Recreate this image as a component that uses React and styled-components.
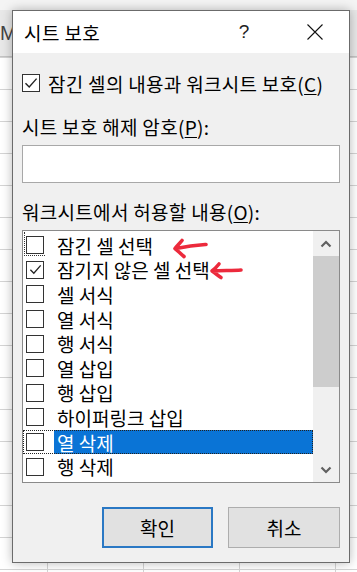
import React from 'react'
import styled, { createGlobalStyle } from 'styled-components'

const GlobalStyle = createGlobalStyle`
  * {
    margin: 0;
    padding: 0;
    box-sizing: border-box;
  }
  body {
    font-family: "Noto Sans CJK KR", "Noto Sans", sans-serif;
    background: #fff;
    overflow: hidden;
  }
`

const Sheet = styled.div`
  position: relative;
  width: 357px;
  height: 572px;
  overflow: hidden;
  background-color: #fff;
  background-image:
    linear-gradient(#d4d4d4 1px, transparent 1px),
    linear-gradient(90deg, #d4d4d4 1px, transparent 1px);
  background-size: 96px 32px;
  background-position: 47px 25px;
`

const TopStrip = styled.div`
  height: 10px;
  background: #f4f4f4;
`

const HeaderRow = styled.div`
  height: 47px;
  background: #e8e8e8;
  border-bottom: 1px solid #c4c4c4;
  display: flex;
  align-items: center;
`

const ColLabel = styled.span`
  margin-left: 0;
  font-family: "Liberation Sans", sans-serif;
  font-size: 20px;
  color: #444;
`

const Dialog = styled.div`
  position: absolute;
  left: 12px;
  top: 10px;
  width: 338px;
  height: 553px;
  border: 1px solid #6b6b6b;
  background: #f0f0f0;
  box-shadow: 0 0 10px rgba(0, 0, 0, 0.28);
  display: flex;
  flex-direction: column;
`

const TitleBar = styled.div`
  height: 42px;
  background: #fff;
  display: flex;
  align-items: center;
  padding-left: 11px;
`

const Title = styled.div`
  flex: 1;
  font-size: 19px;
  letter-spacing: 0.4px;
  color: #000;
`

const HelpMark = styled.div`
  width: 20px;
  text-align: center;
  font-family: "Liberation Sans", sans-serif;
  font-size: 19px;
  color: #222;
  margin-right: 52px;
`

const CloseButton = styled.div`
  width: 18px;
  height: 18px;
  margin-right: 25px;
  display: flex;
  align-items: center;
  justify-content: center;
`

const Body = styled.div`
  flex: 1;
  display: flex;
  flex-direction: column;
  padding: 18px 9px 14px 9px;
`

const CheckRow = styled.label`
  display: flex;
  align-items: center;
  height: 24px;
  font-size: 19px;
  letter-spacing: 0.3px;
  color: #000;
`

const Box = styled.span`
  width: 18px;
  height: 18px;
  border: 1px solid #333;
  background: #fff;
  display: inline-flex;
  align-items: center;
  justify-content: center;
  flex-shrink: 0;
  margin-right: ${p => p.$gap || 8}px;
`

const Label = styled.div`
  font-size: 19px;
  letter-spacing: 0.3px;
  line-height: 24px;
  color: #000;
  margin-top: ${p => p.$top}px;
`

const Key = styled.span`
  text-decoration: underline;
  text-underline-offset: 2px;
`

const PasswordInput = styled.div`
  margin-top: 6px;
  height: 38px;
  border: 1px solid #a8a8a8;
  background: #fff;
`

const ListBox = styled.div`
  position: relative;
  margin-top: 6px;
  height: 253px;
  border: 1px solid #8a8a8a;
  background: #fff;
  display: flex;
`

const Items = styled.div`
  flex: 1;
  padding-top: 2px;
`

const Item = styled.div`
  position: relative;
  height: 24.6px;
  display: flex;
  align-items: center;
  padding-left: 3px;
  outline: ${p => (p.$focus ? '1px dotted #222' : 'none')};
  outline-offset: -1px;
`

const ItemText = styled.span`
  flex: 1;
  align-self: stretch;
  display: flex;
  align-items: center;
  margin-left: 2px;
  padding-left: 3px;
  font-size: 19px;
  color: ${p => (p.$selected ? '#fff' : '#000')};
  background: ${p => (p.$selected ? '#0a74d6' : 'transparent')};
`

const FocusTrace = styled.span`
  position: absolute;
  left: 1px;
  top: -1px;
  width: 21px;
  height: 24px;
  border-left: 1px dotted #333;
  border-bottom: 1px dotted #333;
`

const ScrollBar = styled.div`
  width: 26px;
  background: #f0f0f0;
  display: flex;
  flex-direction: column;
`

const ArrowCell = styled.div`
  height: 25px;
  display: flex;
  align-items: center;
  justify-content: center;
`

const Track = styled.div`
  flex: 1;
  display: flex;
  flex-direction: column;
`

const Thumb = styled.div`
  height: 131px;
  background: #cdcdcd;
`

const Buttons = styled.div`
  margin-top: auto;
  display: flex;
  justify-content: flex-end;
  gap: 15px;
`

const Button = styled.div`
  width: ${p => p.$w}px;
  height: 41px;
  display: flex;
  align-items: center;
  justify-content: center;
  font-size: 19px;
  color: #000;
  background: #e1e1e1;
  border: ${p => (p.$primary ? '2px solid #2a78c4' : '1px solid #adadad')};
`

const Annotation = styled.svg`
  position: absolute;
  left: ${p => p.$x}px;
  top: ${p => p.$y}px;
  overflow: visible;
`

const Check = ({ size = 14 }) => (
  <svg width={size} height={size} viewBox="0 0 14 14">
    <path d="M1.5 7.2 L5.2 11 L12.6 2.6" fill="none" stroke="#222" strokeWidth="1.4" />
  </svg>
)

const Chevron = ({ down }) => (
  <svg width="12" height="8" viewBox="0 0 12 8">
    <path
      d={down ? 'M1.5 1.5 L6 6 L10.5 1.5' : 'M1.5 6.5 L6 2 L10.5 6.5'}
      fill="none"
      stroke="#606060"
      strokeWidth="2.2"
    />
  </svg>
)

const items = [
  { text: '잠긴 셀 선택', trace: true },
  { text: '잠기지 않은 셀 선택', checked: true },
  { text: '셀 서식' },
  { text: '열 서식' },
  { text: '행 서식' },
  { text: '열 삽입' },
  { text: '행 삽입' },
  { text: '하이퍼링크 삽입' },
  { text: '열 삭제', selected: true },
  { text: '행 삭제' },
]

export default function App() {
  return (
    <Sheet>
      <GlobalStyle />
      <TopStrip />
      <HeaderRow>
        <ColLabel>M</ColLabel>
      </HeaderRow>
      <Dialog>
        <TitleBar>
          <Title>시트 보호</Title>
          <HelpMark>?</HelpMark>
          <CloseButton>
            <svg width="16" height="16" viewBox="0 0 16 16">
              <path d="M0.5 0.5 L15.5 15.5 M15.5 0.5 L0.5 15.5" stroke="#111" strokeWidth="1.1" />
            </svg>
          </CloseButton>
        </TitleBar>
        <Body>
          <CheckRow>
            <Box>
              <Check />
            </Box>
            잠긴 셀의 내용과 워크시트 보호(<Key>C</Key>)
          </CheckRow>
          <Label $top={20}>
            시트 보호 해제 암호(<Key>P</Key>):
          </Label>
          <PasswordInput />
          <Label $top={17}>
            워크시트에서 허용할 내용(<Key>O</Key>):
          </Label>
          <ListBox>
            <Items>
              {items.map((item, i) => (
                <Item key={i} $focus={item.selected}>
                  {item.trace && <FocusTrace />}
                  <Box $gap={0}>{item.checked && <Check size={13} />}</Box>
                  <ItemText $selected={item.selected}>{item.text}</ItemText>
                </Item>
              ))}
            </Items>
            <ScrollBar>
              <ArrowCell>
                <Chevron />
              </ArrowCell>
              <Track>
                <Thumb />
              </Track>
              <ArrowCell>
                <Chevron down />
              </ArrowCell>
            </ScrollBar>
            <Annotation $x={150} $y={8} width="34" height="19" viewBox="0 0 34 19">
              <path
                d="M33 5.5 C26 6 18 6.5 3 9.5 M9 1.5 C7 4 4 7 2 9.5 C5 12 8 15 11 17.5"
                fill="none"
                stroke="#ec2a3c"
                strokeWidth="3.6"
                strokeLinecap="round"
                strokeLinejoin="round"
              />
            </Annotation>
            <Annotation $x={187} $y={31} width="32" height="18" viewBox="0 0 32 18">
              <path
                d="M31 8 C24 8.5 14 8.5 2 9 M9 2 C7 4.5 4.5 7 2 9 C5 11 8 13.5 11 15.5"
                fill="none"
                stroke="#ec2a3c"
                strokeWidth="3.6"
                strokeLinecap="round"
                strokeLinejoin="round"
              />
            </Annotation>
          </ListBox>
          <Buttons>
            <Button $primary $w={111}>
              확인
            </Button>
            <Button $w={112}>취소</Button>
          </Buttons>
        </Body>
      </Dialog>
    </Sheet>
  )
}
